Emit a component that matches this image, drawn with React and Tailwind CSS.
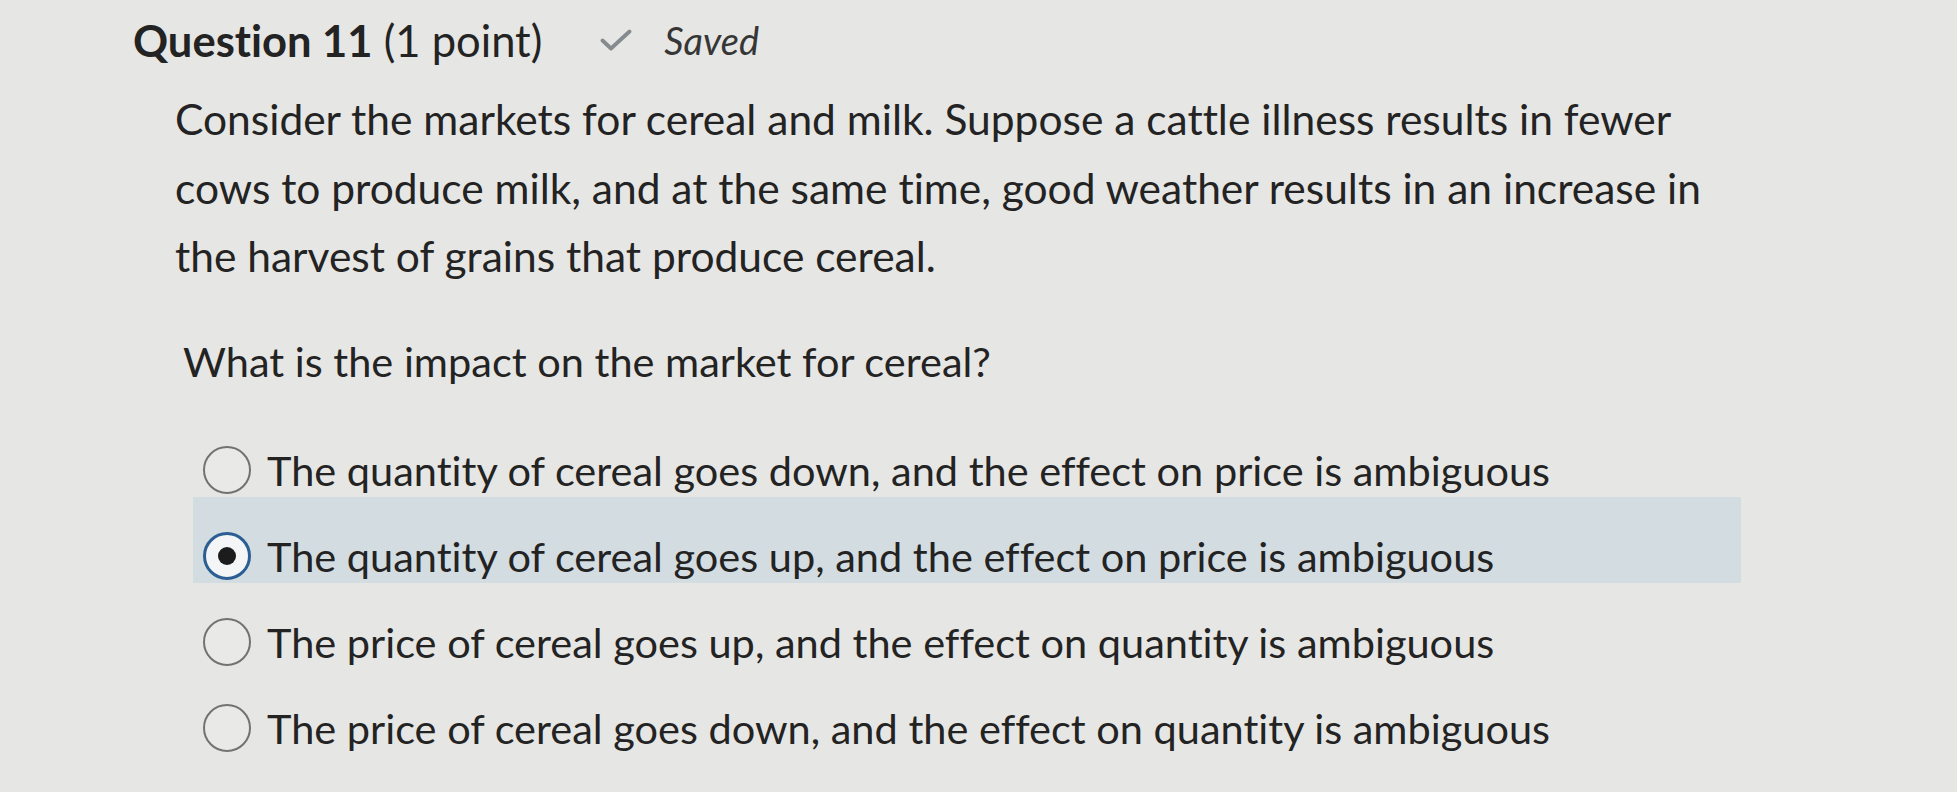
import React from "react";

function Radio({ checked }) {
  if (checked) {
    return (
      <span className="flex h-[48px] w-[48px] shrink-0 items-center justify-center rounded-full border-[3.5px] border-[#2b5e93] bg-[#f3f5f6]">
        <span className="h-[18px] w-[18px] rounded-full bg-[#1c1c1c]" />
      </span>
    );
  }
  return (
    <span className="h-[48px] w-[48px] shrink-0 rounded-full border-2 border-[#727272] bg-[#e9e9e8]" />
  );
}

const options = [
  "The quantity of cereal goes down, and the effect on price is ambiguous",
  "The quantity of cereal goes up, and the effect on price is ambiguous",
  "The price of cereal goes up, and the effect on quantity is ambiguous",
  "The price of cereal goes down, and the effect on quantity is ambiguous",
];

export default function App() {
  return (
    <div className="h-[792px] w-[1957px] overflow-hidden bg-[#e6e6e4] font-['Lato','Noto_Sans',sans-serif] text-[#232323] [font-variant-ligatures:none]">
      <div className="flex items-center pl-[133px] pt-[13px]">
        <h1 className="text-[43.5px] leading-[54px]">
          <span className="font-bold">Question 11</span> <span>(1 point)</span>
        </h1>
        <span className="ml-[58px] flex items-center gap-[32px]">
          <svg width="32" height="22" viewBox="0 0 32 22" fill="none">
            <path d="M2.5 11.5 L11 19.5 L29.5 2.5" stroke="#858b8f" strokeWidth="3.8" strokeLinecap="round" strokeLinejoin="round" />
          </svg>
          <span className="text-[38px] italic leading-[54px] text-[#363636]">Saved</span>
        </span>
      </div>

      <p className="mt-[18px] w-[1750px] pl-[175px] text-[42.5px] leading-[68.5px]">
        Consider the markets for cereal and milk. Suppose a cattle illness results in fewer cows to produce milk, and at the same time, good weather results in an increase in the harvest of grains that produce cereal.
      </p>

      <p className="mt-[36px] pl-[183px] text-[41.5px] leading-[68.5px]">
        What is the impact on the market for cereal?
      </p>

      <div className="ml-[193px] mt-[16px] flex w-[1548px] flex-col">
        {options.map((text, i) => (
          <div
            key={i}
            className={
              i === 1
                ? "flex h-[86px] items-center gap-[16px] bg-[#d3dce1] pl-[10px] pt-[31px]"
                : "flex h-[86px] items-center gap-[16px] pl-[10px] pt-[31px]"
            }
          >
            <Radio checked={i === 1} />
            <span className="whitespace-nowrap text-[41.5px] leading-[54px]">{text}</span>
          </div>
        ))}
      </div>
    </div>
  );
}
